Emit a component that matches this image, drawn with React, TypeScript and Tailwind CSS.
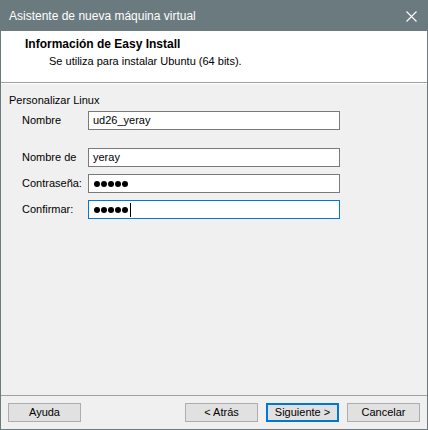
import React from "react";

const font = { fontFamily: '"Liberation Sans", Arial, sans-serif' };

function Field({ label, value, password, focused, clipped }: { label: string; value: string; password?: boolean; focused?: boolean; clipped?: boolean }) {
  return (
    <div className="flex items-center h-[19px]">
      <div className={"w-[59px] ml-[13px] h-[19px] relative " + (clipped ? "overflow-hidden" : "")}>
        {clipped ? (
          <div className="leading-[14px] pt-[2px] text-[11px] text-black">{label}</div>
        ) : (
          <div className="leading-[19px] text-[11px] text-black whitespace-nowrap">{label}</div>
        )}
      </div>
      <div
        className={
          "ml-[7px] w-[252px] h-[19px] bg-white flex items-center pl-[4px] " +
          (focused ? "border border-[#0078d7]" : "border border-[#7a7a7a]")
        }
      >
        {password ? (
          <span className="flex items-center gap-[1px] pl-[1px]">
            {[0, 1, 2, 3, 4].map((i) => (
              <span key={i} className="w-[6px] h-[6px] rounded-full bg-black inline-block" />
            ))}
            {focused && <span className="w-[1px] h-[14px] bg-black ml-[1px]" />}
          </span>
        ) : (
          <span className="text-[11px] text-black leading-none">{value}</span>
        )}
      </div>
    </div>
  );
}

function Btn({ label, focused }: { label: string; focused?: boolean }) {
  return (
    <div
      className={
        "w-[73px] h-[19px] bg-[#e1e1e1] flex items-center justify-center text-[11px] text-black " +
        (focused ? "border-2 border-[#0078d7]" : "border border-[#adadad]")
      }
    >
      {label}
    </div>
  );
}

export default function App() {
  return (
    <div className="w-[428px] h-[430px] border border-[#6b7a7f] bg-[#f0f0f0] flex flex-col" style={font}>
      <div className="h-[30px] bg-[#6b7a7f] flex items-center justify-between pl-[8px] pr-[10px] shrink-0">
        <span className="text-white text-[12px]">Asistente de nueva máquina virtual</span>
        <svg width="11" height="11" viewBox="0 0 11 11">
          <path d="M0.5 0.5L10.5 10.5M10.5 0.5L0.5 10.5" stroke="white" strokeWidth="1.1" />
        </svg>
      </div>
      <div className="h-[51px] bg-white shrink-0 flex flex-col pl-[24px] pt-[5px]">
        <div className="text-[12px] font-bold text-black leading-[17px]">Información de Easy Install</div>
        <div className="text-[11px] text-black leading-[16px] pl-[24px]">Se utiliza para instalar Ubuntu (64 bits).</div>
      </div>
      <div className="h-[1px] bg-[#a0a0a0] shrink-0" />
      <div className="h-[1px] bg-white shrink-0" />
      <div className="flex-1 flex flex-col pl-[8px]">
        <div className="text-[11px] text-black leading-[16px] mt-[8px]">Personalizar Linux</div>
        <div className="mt-[3px]">
          <Field label="Nombre completo:" value="ud26_yeray" clipped />
        </div>
        <div className="mt-[18px]">
          <Field label="Nombre de" value="yeray" />
        </div>
        <div className="mt-[7px]">
          <Field label="Contraseña:" value="" password />
        </div>
        <div className="mt-[7px]">
          <Field label="Confirmar:" value="" password focused />
        </div>
      </div>
      <div className="h-[1px] bg-[#a0a0a0] shrink-0" />
      <div className="h-[33px] shrink-0 flex items-start pt-[7px] px-[7px]">
        <Btn label="Ayuda" />
        <div className="flex-1" />
        <Btn label="< Atrás" />
        <div className="w-[8px]" />
        <Btn label="Siguiente >" focused />
        <div className="w-[8px]" />
        <Btn label="Cancelar" />
      </div>
    </div>
  );
}
